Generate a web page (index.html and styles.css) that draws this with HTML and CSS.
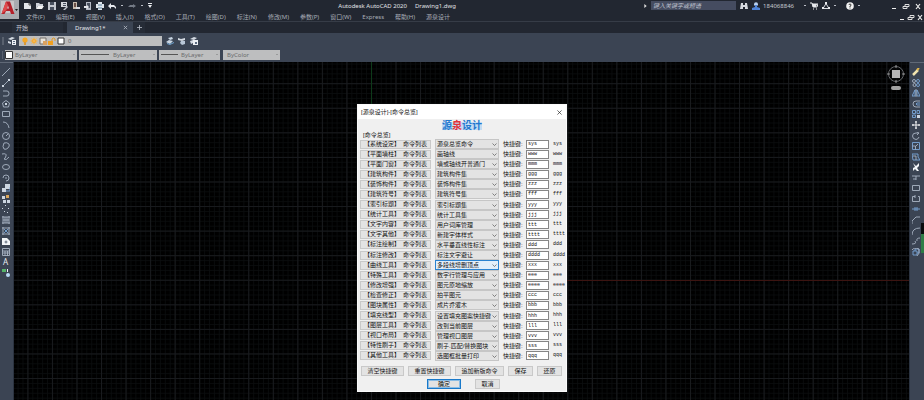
FILE: index.html
```html
<!DOCTYPE html>
<html lang="zh-CN">
<head>
<meta charset="utf-8">
<title>Autodesk AutoCAD 2020 - Drawing1.dwg</title>
<link rel="stylesheet" href="styles.css">
</head>
<body>
<header class="top">
  <button class="app-logo" aria-label="应用程序菜单">
    <svg width="19" height="19" viewBox="0 0 19 19"><rect width="19" height="19" fill="#a9abb0"/><rect x="1" y="1" width="13" height="12" fill="#c9c6c8"/><path d="M1.500 14 6 1.500h4L14.500 14H11l-1-3H6l-1.500 3z" fill="#b3202a"/><path d="M6 1.500 1.500 14l5-4 1.500-5z" fill="#e04a4c"/><path d="M7 8.500h2L8 5.600z" fill="#d8c8ca"/><path d="M15 9h3l-1.500 2z" fill="#222"/></svg>
  </button>
  <div class="top-rows">
    <div class="title-row">
      <div class="quick">
        <button aria-label="新建"><svg viewBox="0 0 8 8"><path d="M0 1h5l2 2v4H0z" fill="#e4e6ea"/><path d="M5 1v2h2" fill="none" stroke="#555"/></svg></button>
        <button aria-label="打开"><svg viewBox="0 0 8 8"><path d="M0 1h3l1 1h3v2H2L0 7z" fill="#cdd1d8"/><path d="M2 4h6L6 7H0z" fill="#f2f2f2"/></svg></button>
        <button aria-label="保存文件"><svg viewBox="0 0 8 8"><path d="M0 0h8v8H0z" fill="#c4c8cf"/><path d="M2 0h4v3H2zM2 5h4v3H2z" fill="#48505e"/></svg></button>
        <button aria-label="另存为"><svg viewBox="0 0 8 8"><path d="M1 0h6v5H1z" fill="#d5d8dd"/><path d="M3 1h3v1H3zM3 3h3v1H3z" fill="#48505e"/><path d="m3 8 4-4 1 1-3 3z" fill="#bfc4cb"/></svg></button>
        <button aria-label="从移动设备打开"><svg viewBox="0 0 8 8"><path d="M1 0h4v7H1z" fill="#c7bcae"/><path d="M2 1h2v4H2z" fill="#6b5148"/><path d="M4 5h4v2H4z" fill="#d6d8dd"/></svg></button>
        <button aria-label="保存到移动设备"><svg viewBox="0 0 8 8"><path d="M2 0h5v8H2z" fill="#b5bac4"/><path d="M3 1h3v5H3z" fill="#48505e"/><path d="M0 4h3V3l2 2-2 2V6H0z" fill="#e4e6ea"/></svg></button>
        <button aria-label="打印"><svg viewBox="0 0 8 8"><path d="M2 0h4v2h2v4H6v2H2V6H0V2h2z" fill="#dfe5ea"/><path d="M2 3h4M2 6h4" stroke="#5c83a0"/></svg></button>
        <button aria-label="放弃"><svg viewBox="0 0 8 8"><path d="M0 4 3 1v2h3l2 2v2L6 5H3v2z" fill="#e8eaee"/></svg></button>
        <i class="dot"></i>
        <button aria-label="重做"><svg viewBox="0 0 8 8"><path d="M8 4 5 2v1H2L0 5h5v1z" fill="#747b86"/></svg></button>
        <i class="dot"></i>
        <button class="narrow" aria-label="自定义"><svg viewBox="0 0 8 8"><path d="M2 1h4v1H2zM2 3h4L4 6z" fill="#e8eaee"/></svg></button>
      </div>
      <h1><span>Autodesk AutoCAD 2020</span><span>Drawing1.dwg</span></h1>
      <div class="account">
        <svg class="mark" viewBox="0 0 3 5"><path d="M0 0 3 2.500 0 5z" fill="#ddd"/></svg>
        <input class="search" type="search" aria-label="搜索" placeholder="键入关键字或短语">
        <button aria-label="查找"><svg viewBox="0 0 8 8"><path d="M1 1h2v2h2V1h2l1 6H5V5H3v2H0z" fill="#d7dae0"/></svg></button>
        <span class="user"><svg viewBox="0 0 8 8"><circle cx="4" cy="2.300" r="2" fill="#b8d0f0"/><path d="M3 3h2v2l3 1v2H0V6l3-1z" fill="#4f83d6"/></svg>184068846</span>
        <i class="dot"></i>
        <button aria-label="商店"><svg viewBox="0 0 8 8"><path d="M0 1h2l1 4h4l1-3H2" fill="none" stroke="#e8eaee"/><path d="M2 2h5L6 5H3z" fill="#e8eaee"/><path d="M3 7h1M6 7h1" stroke="#fff"/></svg></button>
        <button aria-label="保持连接"><svg viewBox="0 0 8 8"><path d="M4 1.500 7 6.500H1z" fill="none" stroke="#d7dae0"/><path d="M3 0h2v2H3zM0 5h2v2H0zM6 5h2v2H6z" fill="#e8eaee"/></svg></button>
        <i class="dot"></i>
        <button class="help" aria-label="帮助"><svg viewBox="0 0 8 8"><circle cx="4" cy="4" r="3.800" fill="#f2f2f2"/><path d="M3 3q0-1 1-1t1 1-1 1v1M4 5.500v1" fill="none" stroke="#333"/></svg></button>
        <i class="dot"></i>
      </div>
      <div class="window-ctl">
        <button aria-label="最小化"><svg viewBox="0 0 8 8"><path d="M2 6.500h4" stroke="#eee"/></svg></button>
        <button aria-label="还原窗口"><svg viewBox="0 0 8 8"><path d="M1 4.500h4v2H1zM3 4V2.500h4v2H5" fill="none" stroke="#ddd"/></svg></button>
        <button aria-label="关闭"><svg viewBox="0 0 8 8"><path d="m2 2 4 5M6 2 2 7" stroke="#eee" stroke-width="1.200"/></svg></button>
      </div>
    </div>
    <div class="menu-row">
      <nav class="menu">
        <a href="#">文件(F)</a><a href="#">编辑(E)</a><a href="#">视图(V)</a><a href="#">插入(I)</a><a href="#">格式(O)</a><a href="#">工具(T)</a><a href="#">绘图(D)</a><a href="#">标注(N)</a><a href="#">修改(M)</a><a href="#">参数(P)</a><a href="#">窗口(W)</a><a href="#">Express</a><a href="#">帮助(H)</a><a href="#">源泉设计</a>
      </nav>
      <div class="window-ctl inner">
        <button aria-label="最小化图形"><svg viewBox="0 0 8 8"><path d="M2 6.500h4" stroke="#eee"/></svg></button>
        <button aria-label="还原图形"><svg viewBox="0 0 8 8"><path d="M1 4.500h4v2H1zM3 4V2.500h4v2H5" fill="none" stroke="#ddd"/></svg></button>
        <button aria-label="关闭图形"><svg viewBox="0 0 8 8"><path d="m2 2 4 5M6 2 2 7" stroke="#eee" stroke-width="1.200"/></svg></button>
      </div>
    </div>
  </div>
</header>

<div class="tabs">
  <button class="tab">开始</button>
  <button class="tab active"><span>Drawing1*</span><svg viewBox="0 0 6 6"><path d="m1 1 4 4M5 1 1 5" stroke="#aeb4be"/></svg></button>
  <button class="tab add" aria-label="新图形"><svg viewBox="0 0 6 6"><path d="M3 0v6M0 3h6" stroke="#b4bac4"/></svg></button>
</div>

<div class="ribbon">
  <div class="ribbon-row">
    <i class="grip"></i>
    <button class="tool" aria-label="图层特性"><svg viewBox="0 0 8 8"><path d="M0 2 4 0l3 1-4 2zM0 4l3 1v2L0 6z" fill="#d4dae2"/><path d="M4 3h4v5H4z" fill="#eef1f5"/><path d="M5 4h2v1H5zM5 6h2v1H5z" fill="#5c6b80"/></svg></button>
    <button class="combo layer">
      <svg viewBox="0 0 8 8"><circle cx="4" cy="3" r="2.600" fill="#f5a623"/><path d="M3 5h2v3H3z" fill="#d99a3a"/></svg>
      <svg viewBox="0 0 8 8"><circle cx="4" cy="4" r="2.500" fill="#f6a821"/><path d="M4 0v8M0 4h8M1 1l6 6M7 1 1 7" stroke="#f3b95c" stroke-width=".7"/></svg>
      <svg viewBox="0 0 8 8"><path d="M1 1h6v6H1z" fill="#e8e4da" stroke="#74706c"/><path d="M4 4h4v4H4z" fill="#d9a262"/></svg>
      <svg viewBox="0 0 8 8"><path d="M0 4h5v4H0z" fill="#f0a020"/><path d="M4 4V2q1.500-2 3 0v2" fill="none" stroke="#e59a22"/></svg>
      <svg viewBox="0 0 8 8"><path d="M1 1h6v6H1z" fill="#fff" stroke="#333"/></svg>
      <span>0</span>
    </button>
    <button class="tool" aria-label="置为当前"><svg viewBox="0 0 8 8"><path d="m0 5 3-2 4 1-3 3zM2 1l4-1 1 2-3 1z" fill="#c9d6e4"/><path d="m1 6 3 1 4-2v1L4 8 1 7z" fill="#6fa2d0"/></svg></button>
    <button class="tool" aria-label="上一个图层"><svg viewBox="0 0 8 8"><path d="m0 1 3 1 4-1v2L4 4 0 3z" fill="#d4dae2"/><path d="M3 4h4v3L4 8 2 6z" fill="#b9c7d7"/></svg></button>
    <button class="tool" aria-label="图层状态"><svg viewBox="0 0 8 8"><path d="m0 2 4-2 3 1-3 2zM0 4l3-1v3L1 7z" fill="#d4dae2"/><path d="M3 3h5v5H3z" fill="#eceff3"/><path d="M5 5h2v2H5z" fill="#5c6b80"/></svg></button>
  </div>
  <div class="ribbon-row">
    <i class="grip slim"></i>
    <button class="combo color"><svg viewBox="0 0 8 8"><path d="M.5.5h7v7h-7z" fill="#fff" stroke="#333"/></svg><span>ByLayer</span><i class="caret"></i></button>
    <button class="combo linetype"><i class="line"></i><span>ByLayer</span><i class="caret"></i></button>
    <button class="combo weight"><i class="line"></i><span>ByLayer</span><i class="caret"></i></button>
    <button class="combo plot"><span>ByColor</span><i class="caret"></i></button>
  </div>
</div>

<main class="workspace">
  <div class="side left">
    <div class="tools">
      <button aria-label="直线"><svg viewBox="0 0 8 8"><path d="m0 8 8-8"/></svg></button>
      <button aria-label="构造线"><svg viewBox="0 0 8 8"><path d="m1 7 6-6"/><path class="solid" d="M0 6h2v2H0zM6 0h2v2H6z"/></svg></button>
      <button aria-label="多段线"><svg viewBox="0 0 8 8"><path d="M1 2h4q2 0 2 2.500T5 7H1"/></svg></button>
      <button aria-label="多边形"><svg viewBox="0 0 8 8"><path d="m4 .5 3.500 2.500-1 4h-5l-1-4z"/><path class="solid" d="M3 3h2v2H3z"/></svg></button>
      <button aria-label="矩形"><svg viewBox="0 0 8 8"><path d="M.5 1.500h7v5h-7z"/></svg></button>
      <button aria-label="圆弧"><svg viewBox="0 0 8 8"><path d="M1 1q5 0 6 6"/></svg></button>
      <button aria-label="圆"><svg viewBox="0 0 8 8"><circle cx="4" cy="4" r="3.500"/><path d="m4 4 2-2"/></svg></button>
      <button aria-label="修订云线"><svg viewBox="0 0 8 8"><path d="M2 1q3-1 5 1 1 2-1 4-2 2-4 1Q0 5 2 1z"/></svg></button>
      <button aria-label="样条曲线"><svg viewBox="0 0 8 8"><path d="M0 1q5-1 4 2T2 6q2 2 5-2"/></svg></button>
      <button aria-label="椭圆"><svg viewBox="0 0 8 8"><ellipse cx="4" cy="4" rx="3.500" ry="2.500"/></svg></button>
      <button aria-label="椭圆弧"><svg viewBox="0 0 8 8"><path d="M1 4q0-3 3-3t3 3-3 3M3 4h2"/></svg></button>
      <button aria-label="插入块"><svg viewBox="0 0 8 8"><path class="solid" d="M0 4h4v4H0zM3 0h5v5H3z"/><path d="M4 7h4V3" class="blue"/></svg></button>
      <button aria-label="创建块"><svg viewBox="0 0 8 8"><path class="solid" d="M0 1h3v3H0zM1 5h3v3H1zM5 5h3v3H5z"/><path class="amber" d="M4 0h3v3H4z"/></svg></button>
      <button aria-label="点"><svg viewBox="0 0 8 8"><path class="solid" d="M3 0h1v1H3zM0 3h1v1H0zM6 3h1v1H6zM2 6h1v1H2zM5 7h1v1H5z"/></svg></button>
      <button aria-label="图案填充"><svg viewBox="0 0 8 8"><path d="M1 0v8M7 0v8M0 1h8M0 7h8M3 1v6M5 1v6M1 4h6"/></svg></button>
      <button aria-label="渐变色"><svg viewBox="0 0 8 8"><path d="M1 0v8M7 0v8M0 1h8M0 7h8"/><path class="blue" d="m2 2 4 4M6 2 2 6"/></svg></button>
      <button aria-label="面域"><svg viewBox="0 0 8 8"><path class="white" d="M0 1h5l3 3v4H0z"/><path d="M3 4h2v2H3z" fill="#333"/></svg></button>
      <button aria-label="表格"><svg viewBox="0 0 8 8"><path d="M.5.5h7v7h-7zM0 3h8M3 3v5M5.500 3v5M1 5h6"/></svg></button>
      <button class="letter" aria-label="多行文字">A</button>
      <button aria-label="添加选定对象"><svg viewBox="0 0 8 8"><path class="green" d="M0 0h4v3H0z"/><path class="white" d="M5 0h1v3H5z"/><circle cx="6" cy="6" r="2" fill="#b8d8f5" stroke="none"/></svg></button>
    </div>
  </div>
  <div class="canvas">
    <svg class="grid" width="100%" height="100%" aria-hidden="true">
      <defs>
        <pattern id="minor" width="4.908" height="4.914" x="13.400" y="21.200" patternUnits="userSpaceOnUse"><path d="M0 .5h5M.5 0v5" stroke="#0b0d0f" stroke-width=".8"/></pattern>
        <pattern id="major" width="24.540" height="24.570" x="13.400" y="21.200" patternUnits="userSpaceOnUse"><path d="M0 .5h25M.5 0v25" stroke="#191b1e"/></pattern>
      </defs>
      <rect width="100%" height="100%" fill="#000"/>
      <rect width="100%" height="100%" fill="url(#minor)"/>
      <rect width="100%" height="100%" fill="url(#major)"/>
      <path d="M357.500 0v218" stroke="#0e3a1a"/>
      <path d="M357 218.500h538" stroke="#3c1411"/>
    </svg>
    <svg class="viewcube" viewBox="0 0 18 26" aria-label="ViewCube"><circle cx="9" cy="9" r="7.500" fill="none" stroke="#63666a"/><path d="M9 0v3M9 15v3M0 9h3M15 9h3" stroke="#999"/><path d="M5 5h8v8H5z" fill="#b5b5b5"/><rect x="4" y="21" width="10" height="4" rx="2" fill="#a2a2a2"/></svg>
  </div>
  <div class="side right">
    <div class="tools">
      <button aria-label="删除"><svg viewBox="0 0 8 8"><path d="m1 7 5-5" stroke="#f1e4b0" stroke-width="2.500"/><path d="m5 2 2-2" stroke="#e3b84b" stroke-width="2"/></svg></button>
      <button aria-label="复制"><svg viewBox="0 0 8 8"><circle cx="2" cy="2" r="1.500"/><circle cx="6" cy="2" r="1.500" class="blue"/><circle cx="2.500" cy="6" r="1.500"/><circle cx="6" cy="6" r="1.500" class="blue"/></svg></button>
      <button aria-label="镜像"><svg viewBox="0 0 8 8"><path d="M3 1v6H0zM5 1v6h3z" class="blue"/><path d="M4 0v8"/></svg></button>
      <button aria-label="偏移"><svg viewBox="0 0 8 8"><path d="M8 1H4Q1 1 1 4t3 3h4"/><path class="blue" d="M8 3H5Q3 4 5 5h3"/></svg></button>
      <button aria-label="阵列"><svg viewBox="0 0 8 8"><path class="blue" d="M.5.5h3v3h-3zM5 .5h2.500v3H5zM.5 5h3v2.500h-3z"/><path class="solid" d="M5 5h3v3H5z"/></svg></button>
      <button aria-label="移动"><svg viewBox="0 0 8 8"><path d="M4 0v8M0 4h8M3 1h2M3 7h2M1 3v2M7 3v2" stroke="#fff"/></svg></button>
      <button aria-label="旋转"><svg viewBox="0 0 8 8"><path d="M7 5Q6 7.500 4 7.500.5 7 .5 4T4 1h2M5 0l2 1-2 2"/></svg></button>
      <button aria-label="缩放"><svg viewBox="0 0 8 8"><path class="blue" d="M.5.5h7v7h-7z"/><path d="M.5 4h3v3.500M4 4l2-2"/></svg></button>
      <button aria-label="拉伸"><svg viewBox="0 0 8 8"><path class="blue" d="M0 1h6v3l2 3H1z"/><path d="M1 3h3v4"/></svg></button>
      <button aria-label="修剪"><svg viewBox="0 0 8 8"><path class="white" d="m1 0 3 3 3-3v3L5 5l2 3H5L3 6 1 8V5l2-1z"/></svg></button>
      <button aria-label="延伸"><svg viewBox="0 0 8 8"><path d="M0 2h8M4 2v4M1 5h3"/></svg></button>
      <button aria-label="打断于点"><svg viewBox="0 0 8 8"><path d="M.5 1.500h7v5h-7z"/></svg></button>
      <button aria-label="打断"><svg viewBox="0 0 8 8"><path d="M3 1.500H.5v5h7v-5H6M3 0v3"/></svg></button>
      <button aria-label="合并"><svg viewBox="0 0 8 8"><path class="blue" d="M0 4h8M3 2v4M5 2v4"/></svg></button>
      <button aria-label="倒角"><svg viewBox="0 0 8 8"><path d="M0 8V5l4-4h4"/></svg></button>
      <button aria-label="圆角"><svg viewBox="0 0 8 8"><path d="M0 8q0-7 8-7"/></svg></button>
      <button aria-label="光顺曲线"><svg viewBox="0 0 8 8"><path d="M0 7q5 0 3-3M5 4q-1-3 3-3"/></svg></button>
      <button aria-label="分解"><svg viewBox="0 0 8 8"><path class="blue" d="M1 3h4v4H1zM3 1h4v4H5M3 1v2"/><path d="M0 2q2-3 7-1 1 5-2 7"/></svg></button>
    </div>
    <i class="meter"></i>
  </div>
</main>

<section class="dialog" role="dialog" aria-labelledby="dialog-title">
  <header class="dialog-head">
    <h2 id="dialog-title">[源泉设计]-[命令总览]</h2>
    <button aria-label="关闭对话框"><svg viewBox="0 0 6 6"><path d="m.5.5 5 5M5.500.5l-5 5" stroke="#222" stroke-width=".8"/></svg></button>
  </header>
  <div class="brand">源<em>泉</em>设计</div>
  <form class="dialog-body">
    <p class="legend">[命令总览]</p>
    <div class="commands" id="commands"></div>
    <div class="actions">
      <button type="button" class="wide">清空快捷键</button>
      <button type="button" class="wide">重置快捷键</button>
      <button type="button" class="wider">追加新版命令</button>
      <button type="button">保存</button>
      <button type="button">还原</button>
    </div>
    <div class="confirm">
      <button type="button" class="default">确定</button>
      <button type="button">取消</button>
    </div>
  </form>
</section>
<script src="commands.js"></script>
</body>
</html>
```
FILE: styles.css
```css
* { box-sizing: border-box; }
body {
  margin: 0;
  min-height: 100vh;
  display: flex;
  flex-direction: column;
  position: relative;
  overflow: hidden;
  background: #222731;
  color: #c3c7cf;
  font: 6px/8px "Noto Sans", "Noto Sans CJK SC", sans-serif;
}
button, input, select { font: inherit; color: inherit; margin: 0; padding: 0; border: 0; border-radius: 0; background: none; }
button { display: flex; align-items: center; justify-content: center; white-space: nowrap; }
svg { display: block; flex: none; }
h1, h2, p { margin: 0; font-size: inherit; font-weight: 400; }
a { color: inherit; text-decoration: none; }

.top { display: flex; height: 22px; border-bottom: 1px solid #363c47; }
.app-logo { width: 19px; height: 19px; }
.top-rows { flex: 1; }
.title-row, .menu-row { display: flex; align-items: center; height: 11px; position: relative; }
.title-row svg, .menu-row svg { width: 8px; height: 8px; }
.quick { display: flex; align-items: center; gap: 4px; padding-left: 5px; flex: 7; }
.quick .dot { margin: 0 1px; }
.dot { width: 2px; height: 1px; background: #b9bdc5; flex: none; }
.quick .narrow { margin-left: -2px; }
h1 { display: flex; gap: 8px; color: #e0e2e6; white-space: nowrap; }
.account { flex: 9; display: flex; align-items: center; justify-content: flex-end; gap: 4px; }
.title-row .mark { width: 3px; height: 4px; }
.search { width: 85px; height: 9px; padding: 0 2px; background: #454c60; font-style: italic; outline: 0; appearance: none; }
.search::placeholder { color: #c0c4d0; opacity: 1; }
.user { display: flex; gap: 3px; align-items: center; margin-right: 6px; }
.help { margin-left: 6px; }
.window-ctl { display: flex; gap: 4px; padding: 0 2px 0 30px; }
.window-ctl.inner { gap: 1px; padding: 0; }
.menu { flex: 1; display: flex; gap: 11px; padding-left: 7px; color: #a9aeb8; }

.tabs { display: flex; height: 11px; padding-left: 12px; background: #222731; }
.tab { padding: 0 4px; color: #c3c7cf; background: #262c37; width: 51px; justify-content: flex-start; }
.tab.active { width: 66px; margin-left: 4px; padding: 0 5px 0 8px; justify-content: space-between; background: #3b4453; color: #e6e8ec; }
.tab svg { width: 5px; height: 5px; }
.tab.add { width: 12px; justify-content: center; }

.ribbon { background: #3b4453; height: 29px; padding: 3px 0 2px; display: flex; flex-direction: column; gap: 3px; }
.ribbon-row { display: flex; height: 11px; align-items: center; gap: 2px; }
.ribbon svg { width: 8px; height: 8px; }
.grip { width: 2px; height: 8px; margin: 0 1px 0 2px; background: #59616e; }
.grip.slim { width: 1px; margin-right: 0; }
.combo { height: 10px; background: #bdbebf; color: #6b6c6e; justify-content: flex-start; gap: 2px; padding: 0 2px; }
.combo .caret { margin-left: auto; border: 1px solid transparent; border-top-color: #777; }
.combo .line { height: 1px; background: #555; }
.combo.layer { width: 143px; gap: 1px; margin-right: 1px; }
.layer span { margin-left: 2px; }
.tool { width: 10px; }
.combo.color { width: 72px; padding-left: 0; }
.combo.linetype { width: 78px; gap: 4px; }
.linetype .line { width: 28px; }
.combo.weight { width: 61px; gap: 3px; }
.weight .line { width: 17px; }
.combo.plot { width: 57px; margin-left: 1px; padding-left: 4px; }

.workspace { flex: 1; display: flex; }
.side { width: 14px; background: #3b4453; position: relative; }
.side.right { width: 15px; }
.left { border-right: 1px solid #2b3340; }
.right { border-left: 1px solid #2b3340; }
.tools { display: grid; grid-auto-rows: 1fr; height: 216px; padding: 4px 3px 0 1px; border-top: 1px solid #606977; }
.right .tools { height: 195px; }
.tools svg { width: 8px; height: 8px; fill: none; stroke: #a9b4c4; stroke-width: .9; }
.tools .solid { fill: #ccd5e0; stroke: none; }
.tools .white { fill: #f3f5f7; stroke: none; }
.tools .blue { stroke: #79a6d8; }
.tools .amber { fill: #d9a75c; stroke: none; }
.tools .green { fill: #56b36a; stroke: none; }
.letter { font-size: 8px; color: #e9ecf0; }
.meter { position: absolute; right: 0; top: 161px; width: 3px; height: 30px; background: linear-gradient(#0a0c0e 11px, #2f7d46 11px); }
.canvas { flex: 1; position: relative; background: #000; }
.grid { position: absolute; inset: 0; }
.viewcube { position: absolute; top: 3px; right: 4px; width: 18px; height: 26px; }

.dialog {
  position: absolute; top: 104px; left: 0; right: 0; margin: 0 auto;
  width: 210px; padding-bottom: 2px;
  background: #f0f0f0; color: #111; border: 1px solid #fafafa;
  font-family: "Liberation Sans", "Noto Sans CJK SC", sans-serif;
}
.dialog-head { display: flex; align-items: center; justify-content: space-between; height: 14px; padding: 0 4px 0 3px; background: #fff; }
.dialog-head svg { width: 5px; height: 5px; }
.brand { width: max-content; margin: 1px auto 0; font-size: 10px; line-height: 12px; font-weight: 700; color: #2277cf; background: linear-gradient(transparent 2px, #c3dcf3 2px, #c3dcf3 10px, transparent 10px); }
.brand em { font-style: normal; color: #e2333b; }
.dialog-body { padding: 0 2px; }
.legend { padding-left: 3px; line-height: 7px; }
.commands { display: grid; grid-auto-rows: 1fr; height: 222px; }
.command { display: grid; grid-template-columns: 71px 64px 19px 23px 1fr; column-gap: 4px; align-items: center; }
.command button, .actions button, .confirm button { height: 9px; line-height: 7px; background: #e3e3e3; border: 1px solid #c9c9c9; }
.command button { gap: 3px; }
.command select { appearance: none; width: 64px; height: 10px; line-height: 8px; padding: 0 1px; border: 1px solid #c6c6c6; background: #e3e3e3; outline: 0; }
.command label { white-space: nowrap; }
.pick { position: relative; display: block; height: 10px; }
.pick svg { position: absolute; right: 2px; top: 4px; width: 5px; height: 3px; }
.command.current select { border-color: #2a83d0; background: #e2effa; }
.command input { width: 23px; height: 9px; padding: 0 1px; background: #fff; border: 1px solid #858585; outline: 0; }
.command input, .code { font-family: "Liberation Mono", monospace; font-size: 5px; line-height: 7px; }
.actions { display: flex; gap: 4px; padding: 5px 1px 0; }
.actions button, .confirm button { width: 25px; height: 10px; }
.actions .wide { width: 43px; }
.actions .wider { width: 49px; }
.confirm { display: flex; gap: 14px; padding: 3px 0 0 67px; }
.confirm .default { width: 34px; border-color: #1979ca; outline: 1px solid #8bbce4; outline-offset: -2px; }
```
FILE: commands.js
```js
const commands = [
  ["系统设定", "源泉总览命令", "sys"],
  ["平面墙柱", "画轴线", "www"],
  ["平面门窗", "墙或轴线开普通门", "mmm"],
  ["建筑构件", "建筑构件集", "ggg"],
  ["装饰构件", "装饰构件集", "zzz"],
  ["建筑符号", "建筑符号集", "fff"],
  ["索引标题", "索引标题集", "yyy"],
  ["统计工具", "统计工具集", "jjj"],
  ["文字内容", "用户词库管理", "ttt"],
  ["文字其他", "新建字体样式", "tttt"],
  ["标注绘制", "水平垂直线性标注", "ddd"],
  ["标注修改", "标注文字避让", "dddd"],
  ["曲线工具", "多段线增删顶点", "xxx"],
  ["特殊工具", "数字行管理与应用", "eee"],
  ["修改增强", "图元原地缩放", "eeee"],
  ["检查修正", "拍平图元", "ccc"],
  ["图块属性", "成片乔灌木", "bbb"],
  ["填充线型", "设置填充图案快捷键", "hhh"],
  ["图层工具", "改到当前图层", "lll"],
  ["视口布局", "管理视口图层", "vvv"],
  ["特性刷子", "刷子.匹配/替换图块", "sss"],
  ["其他工具", "选图框批量打印", "qqq"]
];

document.getElementById("commands").innerHTML = commands.map(([group, name, key], i) => `
  <div class="command${group === "曲线工具" ? " current" : ""}">
    <button type="button"><span>【${group}】</span><span>命令列表</span></button>
    <span class="pick"><select aria-label="${group}"><option>${name}</option></select><svg viewBox="0 0 5 3"><path d="m.5.5 2 2 2-2" fill="none" stroke="#555" stroke-width=".7"/></svg></span>
    <label for="key${i}">快捷键:</label>
    <input id="key${i}" value="${key}">
    <span class="code">${key}</span>
  </div>`).join("");
```
